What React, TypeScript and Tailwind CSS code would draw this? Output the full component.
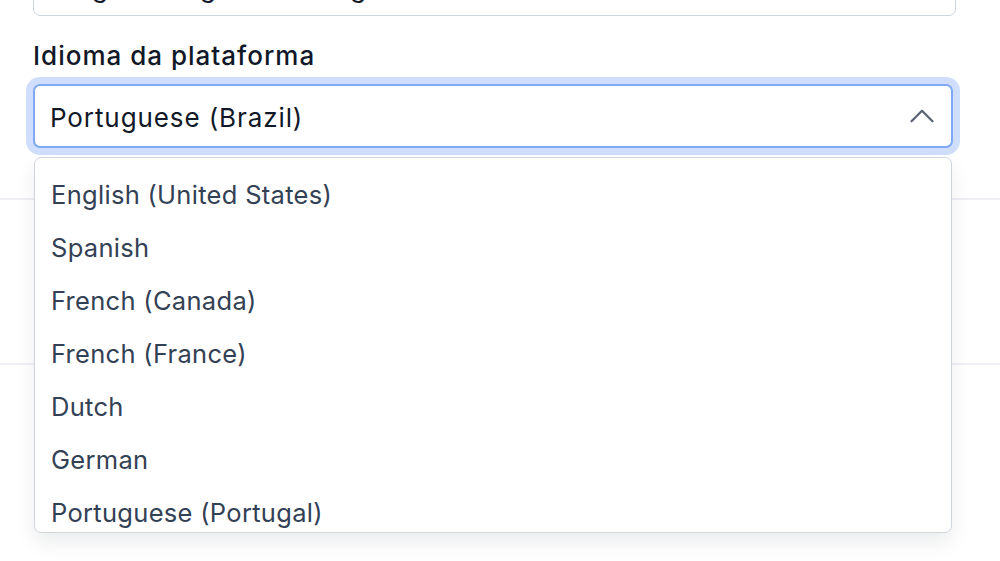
import { ChevronUp } from "lucide-react";

const languages = [
  "English (United States)",
  "Spanish",
  "French (Canada)",
  "French (France)",
  "Dutch",
  "German",
  "Portuguese (Portugal)",
];

export default function App() {
  return (
    <div
      className="h-[561px] w-full overflow-hidden bg-white"
      style={{ fontFamily: "Inter, 'Noto Sans', sans-serif" }}
    >
      <div className="pl-[33px] pr-[47px]">
        {/* previous field, scrolled mostly out of view */}
        <div className="-mr-[3px] -mt-[48px] flex h-[64px] items-center rounded-[7px] border-[1.5px] border-[#cfd5df] px-[16px] pt-[6px] text-[26px] tracking-[0.6px] text-[#111827]">
          Diego Rodrigues Santiago
        </div>

        <label className="mt-[24px] block text-[26px] font-medium leading-[32px] tracking-[1px] text-[#111827]">
          Idioma da plataforma
        </label>

        <div className="relative z-10 mt-[12px]">
          <button className="flex h-[64px] w-full items-center justify-between rounded-[7px] border-2 border-[#80a8f5] bg-white pl-[15px] pr-[8px] text-left text-[26px] tracking-[0.9px] text-[#111827] ring-[7px] ring-[#cfdefc]">
            <span className="pt-[3px]">Portuguese (Brazil)</span>
            <ChevronUp className="h-[42px] w-[42px] text-[#5b6474]" strokeWidth={1.3} />
          </button>

          <ul className="absolute left-[1px] right-[1px] top-[73px] h-[376px] overflow-hidden rounded-[7px] border-[1.5px] border-[#d1d5de] bg-white pt-[10px] shadow-[0_10px_20px_rgba(15,23,42,0.08)]">
            {languages.map((lang) => (
              <li
                key={lang}
                className="flex h-[53px] items-center px-[16px] pt-[2px] text-[25.5px] tracking-[0.3px] text-[#334155]"
              >
                {lang}
              </li>
            ))}
          </ul>
        </div>
      </div>

      <div className="mt-[50px] h-[165px] border-t-2 border-[#eef0f4]" />
      <div className="border-t-2 border-[#eef0f4]" />
    </div>
  );
}
